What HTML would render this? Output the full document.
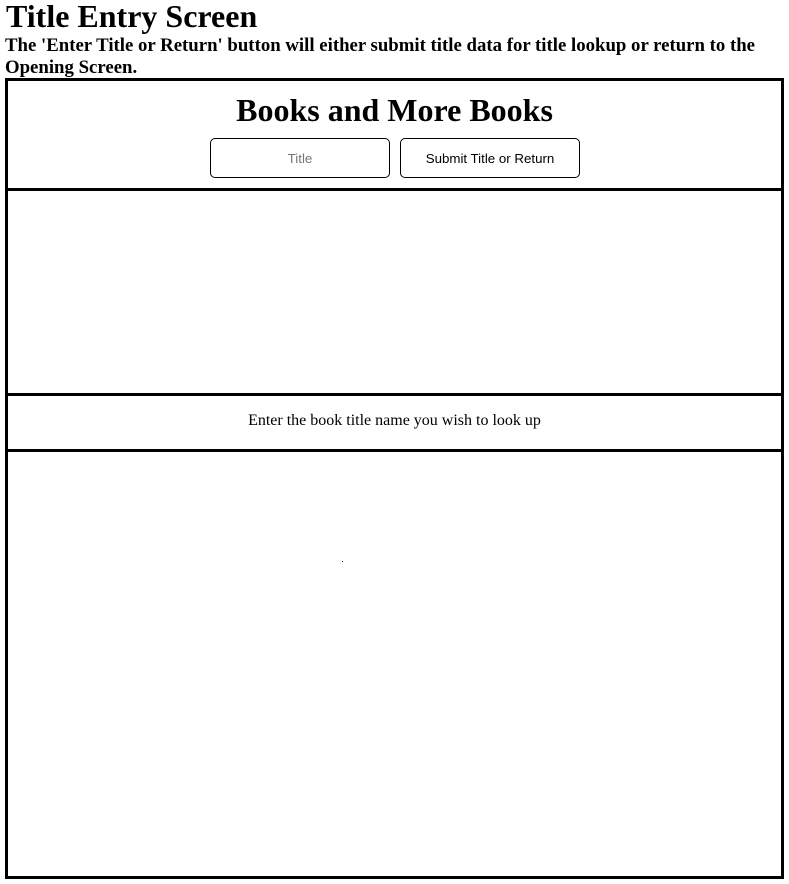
<!DOCTYPE html>
<html><head><style>
body{margin:0;width:789px;height:884px;background:#fff;font-family:"Liberation Serif",serif;position:relative;overflow:hidden}
.a{position:absolute;margin:0}
h1.a{font-size:32px;left:6px;top:-2px;line-height:37px}
h3.a{font-size:18.8px;left:5px;top:35px;line-height:22px;width:780px}
.box{position:absolute;left:5px;top:78px;width:773px;height:795px;border:3px solid #000}
.hl{position:absolute;left:5px;width:779px;height:3px;background:#000}
.c{position:absolute;left:0;width:789px;text-align:center}
.in{position:absolute;top:138px;width:178px;height:38px;border:1px solid #000;border-radius:5px;font-family:"Liberation Sans",sans-serif;font-size:13.3px;text-align:center;line-height:40px}
</style></head><body>
<h1 class="a">Title Entry Screen</h1>
<h3 class="a">The 'Enter Title or Return' button will either submit title data for title lookup or return to the Opening Screen.</h3>
<div class="box"></div>
<div class="hl" style="top:188px"></div>
<div class="hl" style="top:393px"></div>
<div class="hl" style="top:449px"></div>
<div class="c" style="top:90px;font-size:32px;font-weight:bold;line-height:40px">Books and More Books</div>
<div class="in" style="left:210px;color:#757575">Title</div>
<div class="in" style="left:400px;color:#000">Submit Title or Return</div>
<div class="c" style="top:411px;font-size:16px;line-height:20px">Enter the book title name you wish to look up</div>
<div style="position:absolute;left:342px;top:561px;width:1px;height:1px;background:#00f"></div>
</body></html>
